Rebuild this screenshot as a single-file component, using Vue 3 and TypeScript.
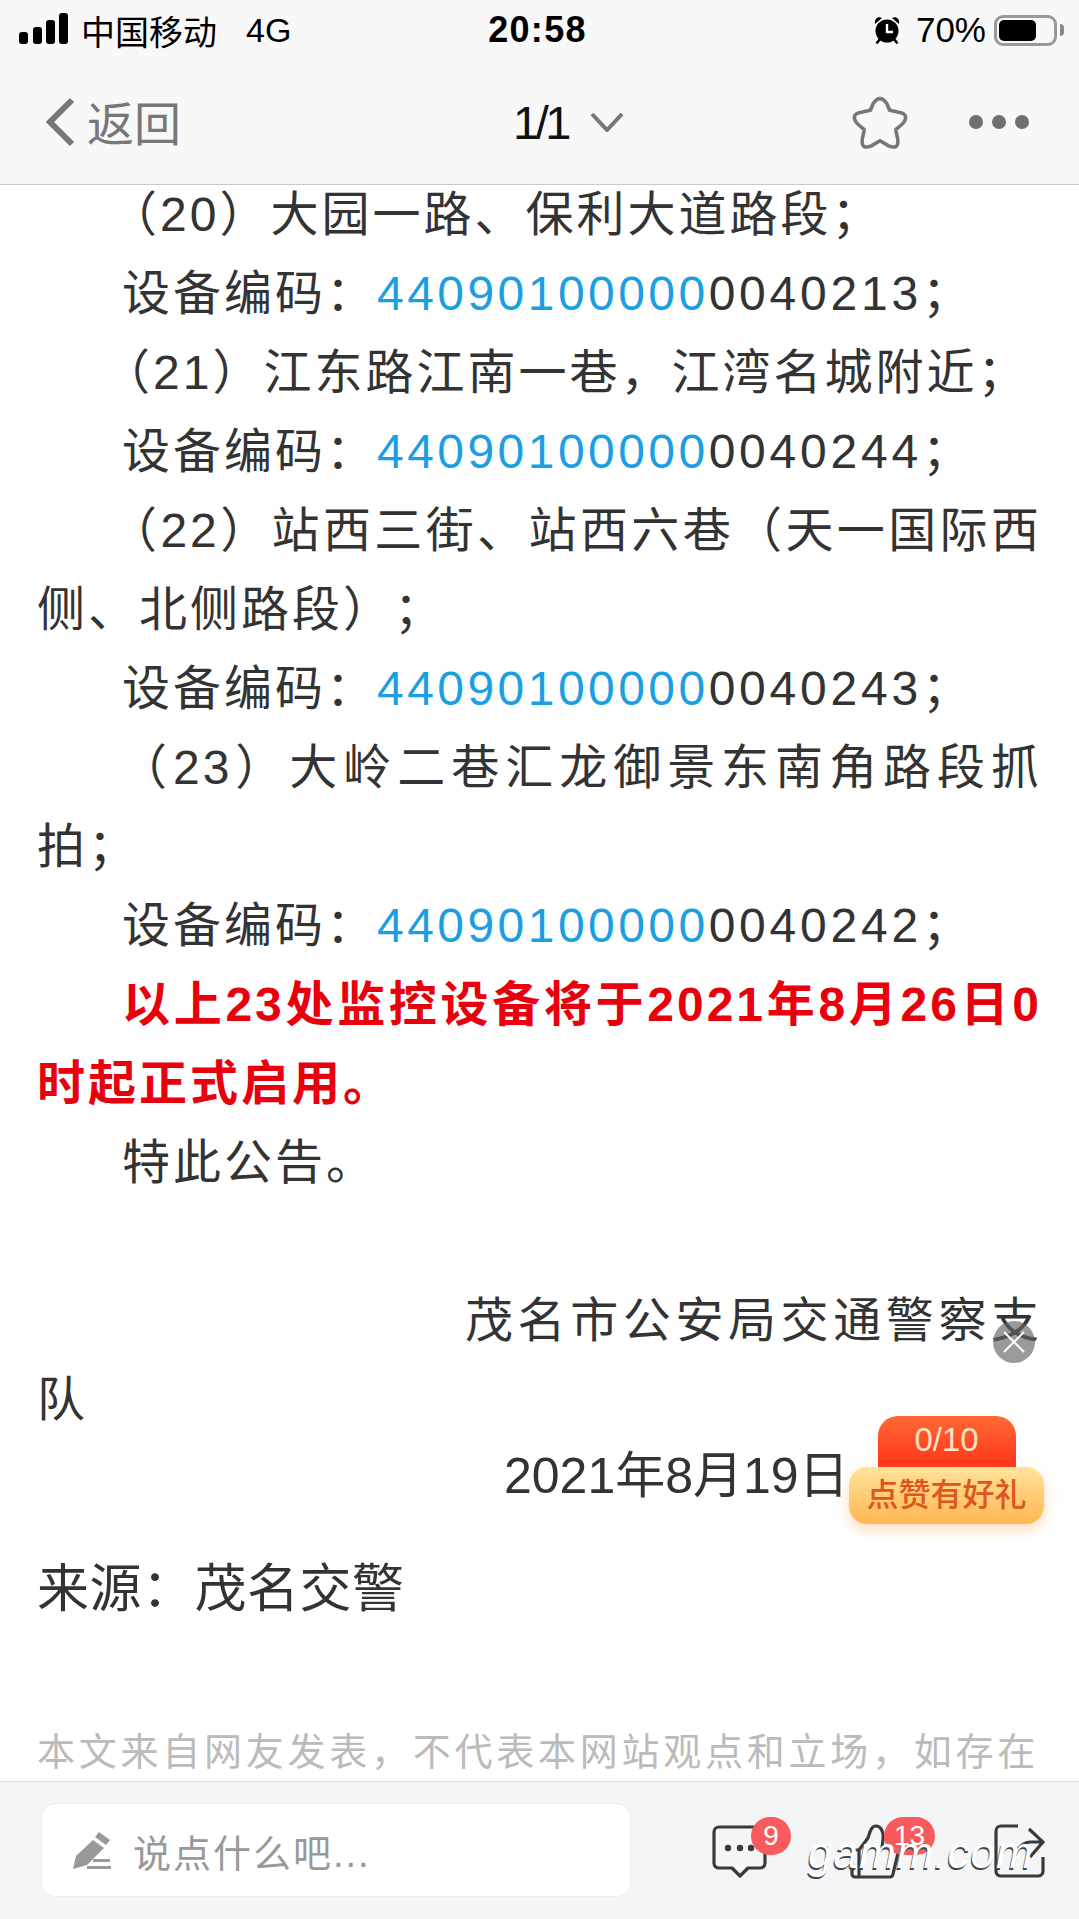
<script setup lang="ts">
interface Item { title: string; tail: string; cls?: string }
const items: Item[] = [
  { title: '（20）大园一路、保利大道路段；', tail: '0040213' },
  { title: '（21）江东路江南一巷，江湾名城附近；', tail: '0040244', cls: 'tight' },
  { title: '（22）站西三街、站西六巷（天一国际西侧、北侧路段）；', tail: '0040243' },
  { title: '（23）大岭二巷汇龙御景东南角路段抓拍；', tail: '0040242', cls: 'wide' },
]
</script>

<template>
  <div class="page">
    <header class="top">
      <div class="status">
        <div class="st-left">
          <svg class="signal" width="50" height="32" viewBox="0 0 50 32">
            <rect x="0" y="19" width="9" height="12" rx="3" />
            <rect x="14" y="14" width="9" height="17" rx="3" />
            <rect x="27" y="7" width="9" height="24" rx="3" />
            <rect x="40" y="0" width="9" height="31" rx="3" />
          </svg>
          <span class="carrier">中国移动</span>
          <span class="net">4G</span>
        </div>
        <div class="time">20:58</div>
        <div class="st-right">
          <svg class="alarm" width="28" height="30" viewBox="0 0 28 30">
            <path d="M2 9 C1 4 5 1 9 3 Z M26 9 C27 4 23 1 19 3 Z" fill="#000" />
            <path d="M7 24 L3.5 28.5 M21 24 L24.5 28.5" stroke="#000" stroke-width="2.5" />
            <circle cx="14" cy="16" r="11.5" fill="#000" />
            <path d="M14 9 V17 H20" stroke="#fff" stroke-width="2.4" fill="none" />
          </svg>
          <span class="pct">70%</span>
          <div class="battery"><div class="level"></div></div>
          <div class="nub"></div>
        </div>
      </div>
      <nav class="nav">
        <div class="back">
          <svg width="30" height="50" viewBox="0 0 30 50">
            <path d="M27 3 L5 25 L27 47" fill="none" stroke="#777" stroke-width="6" />
          </svg>
          <span class="back-label">返回</span>
        </div>
        <div class="pager">
          <span class="pager-num">1/1</span>
          <svg width="34" height="20" viewBox="0 0 34 20">
            <path d="M2 2 L17 18 L32 2" fill="none" stroke="#777" stroke-width="4" />
          </svg>
        </div>
        <div class="nav-tools">
          <svg width="60" height="57" viewBox="-1 -1 59 56">
            <path d="M22 8 Q28.500 -1 35 8 L38 15 L47 17 Q58 19 51 28 L44 34 L46 44 Q47 54 37 50 L28.500 45 L20 50 Q10 54 11 44 L13 34 L6 28 Q-1 19 10 17 L19 15 Z" fill="none" stroke="#777" stroke-width="3.500" stroke-linejoin="round" />
          </svg>
          <div class="dots"><i></i><i></i><i></i></div>
        </div>
      </nav>
    </header>

    <main class="content">
      <article class="article">
        <template v-for="item in items" :key="item.tail">
          <p class="para title" :class="item.cls">{{ item.title }}</p>
          <p class="para code">设备编码：<span class="link">44090100000</span><span class="digits">{{ item.tail }}</span>；</p>
        </template>
        <p class="para red">以上23处监控设备将于2021年8月26日0时起正式启用。</p>
        <p class="para code">特此公告。</p>
        <p class="para"><br /></p>
        <p class="para sign">茂名市公安局交通警察支队</p>
        <p class="para date">2021年8月19日</p>
      </article>
      <p class="source">来源：茂名交警</p>
      <p class="notice">本文来自网友发表，不代表本网站观点和立场，如存在</p>
    </main>

    <footer class="bottom">
      <div class="input">
        <svg width="38" height="38" viewBox="0 0 38 38">
          <path d="M26 1 L37 9 L33 14 L22 6 Z M20 9 L31 17 L14 34 L0 38 L3 25 Z" fill="#999" />
          <path d="M20 28 H37 V31 H20 Z M14 35 H38 V38 H14 Z" fill="#999" />
        </svg>
        <span>说点什么吧...</span>
      </div>
      <div class="actions">
        <div class="act act-comment">
          <svg width="56" height="54" viewBox="0 0 56 54">
            <path d="M7 2 H48 a5 5 0 0 1 5 5 V38 a5 5 0 0 1 -5 5 H36 L28 51 L20 43 H7 a5 5 0 0 1 -5 -5 V7 a5 5 0 0 1 5 -5 Z" fill="none" stroke="#3a3a3a" stroke-width="3.200" stroke-linejoin="round" />
            <circle cx="16" cy="23" r="3.200" fill="#3a3a3a" />
            <circle cx="28" cy="23" r="3.200" fill="#3a3a3a" />
            <circle cx="39" cy="23" r="3.200" fill="#3a3a3a" />
          </svg>
          <span class="badge one">9</span>
        </div>
        <div class="act act-like">
          <svg width="50" height="56" viewBox="0 0 50 56">
            <path d="M9 26 L18 14 C20 8 21 2 26 2 C31 2 34 8 33 16 L32 24 H44 a4 4 0 0 1 4 5 L43 50 a3 3 0 0 1 -3 3 H5 a3 3 0 0 1 -3 -3 V29 a3 3 0 0 1 3 -3 H9 V53" fill="none" stroke="#3a3a3a" stroke-width="3.200" stroke-linejoin="round" />
          </svg>
          <span class="badge two">13</span>
        </div>
        <div class="act act-share">
          <svg width="52" height="56" viewBox="0 0 52 56">
            <path d="M24 2 H7 a5 5 0 0 0 -5 5 V47 a5 5 0 0 0 5 5 H44 a5 5 0 0 0 5 -5 V33" fill="none" stroke="#3a3a3a" stroke-width="3.200" />
            <path d="M35 5 L49 18 L36 33 M48 18 H36 Q21 19 17 46" fill="none" stroke="#3a3a3a" stroke-width="3.200" />
          </svg>
        </div>
      </div>
    </footer>

    <button class="close" type="button" aria-label="关闭">
      <svg width="24" height="24" viewBox="0 0 24 24">
        <path d="M2 2 L22 22 M22 2 L2 22" stroke="#fff" stroke-width="2" />
      </svg>
    </button>
    <div class="promo">
      <div class="promo-count">0/10</div>
      <div class="promo-label">点赞有好礼</div>
    </div>
    <div class="watermark">gamm.com</div>
  </div>
</template>

<style>
html, body { margin: 0; padding: 0; background: #fff; }
</style>

<style scoped>
.page {
  position: relative;
  width: 1079px;
  height: 1919px;
  overflow: hidden;
  display: flex;
  flex-direction: column;
  background: #fff;
  font-family: "Liberation Sans", "Noto Sans CJK SC", sans-serif;
  color: #333;
  text-spacing-trim: space-all;
}
.top {
  position: relative;
  z-index: 2;
  flex: none;
  height: 184px;
  background: #f8f8f8;
  border-bottom: 1px solid #c9c9c9;
}
.status {
  height: 60px;
  display: grid;
  grid-template-columns: 1fr auto 1fr;
  align-items: center;
  padding: 0 15px 0 19px;
  color: #000;
  font-size: 34px;
}
.st-left { display: flex; align-items: center; }
.signal { fill: #000; margin-top: -3px; }
.carrier { margin-left: 12px; }
.net { margin-left: 29px; font-size: 34px; }
.time { font-weight: 700; font-size: 36px; letter-spacing: 1.300px; margin-left: -8px; }
.st-right { display: flex; align-items: center; justify-content: flex-end; }
.alarm { margin-right: 15px; }
.pct { margin-right: 8px; font-size: 35px; }
.battery {
  width: 63px;
  height: 31px;
  box-sizing: border-box;
  border: 3px solid #999;
  border-radius: 9px;
  padding: 2px;
}
.level { width: 37px; height: 21px; background: #000; border-radius: 5px; }
.nub { width: 4px; height: 12px; background: #888; border-radius: 0 6px 6px 0; margin-left: 3px; }
.nav {
  height: 124px;
  display: grid;
  grid-template-columns: 1fr auto 1fr;
  align-items: center;
  padding: 0 47px 0 45px;
  color: #777;
}
.back { display: flex; align-items: center; gap: 12px; font-size: 47px; }
.back-label { margin-top: -4px; }
.pager {
  display: flex;
  align-items: center;
  gap: 22px;
  font-size: 47px;
  color: #111;
  margin-left: 60px;
}
.pager-num { letter-spacing: -3.500px; }
.nav-tools { display: flex; align-items: center; justify-content: flex-end; gap: 59px; margin-right: 3px; }
.dots { display: flex; gap: 9px; }
.dots i { display: block; width: 14px; height: 14px; border-radius: 50%; background: #6f6f6f; }
.content {
  flex: 1;
  min-height: 0;
  overflow: hidden;
  margin-top: -10px;
  padding: 0 37px 0;
}
.article { font-size: 48px; letter-spacing: 3px; line-height: 79px; text-align: justify; }
.para { margin: 0; }
.title { text-indent: 72px; }
.title.tight { text-indent: 65px; }
.title.wide { text-indent: 82px; }
.code { text-indent: 85px; }
.link { color: #1b9fe2; letter-spacing: 3.450px; }
.digits { letter-spacing: 3.800px; }
.red { color: #e8000d; font-weight: 700; text-indent: 85px; }
.sign { text-indent: 428px; }
.date { text-indent: 467px; font-size: 50px; letter-spacing: 0; line-height: 74px; }
.source { margin: 37px 0 0; font-size: 52px; letter-spacing: 0.500px; line-height: 79px; color: #333; }
.notice {
  margin: 84px 0 0;
  font-size: 38px;
  letter-spacing: 3.750px;
  line-height: 79px;
  color: #bbb;
  white-space: nowrap;
}
.bottom {
  position: relative;
  z-index: 2;
  flex: none;
  height: 138px;
  box-sizing: border-box;
  display: flex;
  align-items: flex-start;
  padding: 21px 0 0 41px;
  background: #f4f5f7;
  border-top: 1px solid #dcdcdc;
}
.input {
  width: 590px;
  height: 94px;
  box-sizing: border-box;
  display: flex;
  align-items: center;
  gap: 22px;
  padding-left: 31px;
  background: #fff;
  border: 1px solid #ececec;
  border-radius: 14px;
  font-size: 38px;
  letter-spacing: 2px;
  color: #999;
}
.actions { display: flex; align-items: flex-start; margin-left: 81px; padding-top: 21px; }
.act { position: relative; }
.act svg { display: block; }
.act-comment { margin-top: 1px; }
.act-like { margin-left: 82px; }
.act-share { margin-left: 94px; }
.badge {
  position: absolute;
  height: 38px;
  min-width: 40px;
  box-sizing: border-box;
  border-radius: 19px;
  background: #f85a5e;
  color: #fff;
  font-size: 28px;
  line-height: 38px;
  text-align: center;
}
.badge.one { left: 39px; top: -8px; }
.badge.two { left: 34px; top: -7px; width: 51px; }
.close {
  position: absolute;
  left: 993px;
  top: 1321px;
  z-index: 3;
  width: 42px;
  height: 42px;
  padding: 0;
  border: 0;
  border-radius: 50%;
  background: rgba(100, 100, 100, 0.65);
  display: flex;
  align-items: center;
  justify-content: center;
}
.promo {
  position: absolute;
  left: 849px;
  top: 1416px;
  z-index: 3;
  width: 195px;
  display: flex;
  flex-direction: column;
  align-items: center;
  text-align: center;
}
.promo-count {
  width: 138px;
  height: 51px;
  border-radius: 20px 20px 0 0;
  background: linear-gradient(#ff6a35, #ff3419);
  color: #ffe3c4;
  font-size: 33px;
  line-height: 48px;
}
.promo-label {
  width: 195px;
  height: 57px;
  border-radius: 18px;
  background: linear-gradient(#ffe39a, #ffb753);
  color: #dd5520;
  font-size: 32px;
  font-weight: 500;
  line-height: 56px;
  box-shadow: 0 6px 14px rgba(255, 170, 90, 0.4);
}
.watermark {
  position: absolute;
  left: 808px;
  top: 1823px;
  z-index: 4;
  font-size: 44px;
  font-style: italic;
  line-height: 60px;
  letter-spacing: 1px;
  color: #fff;
  text-shadow: -1px 2px 0 #444;
  white-space: nowrap;
}
</style>
